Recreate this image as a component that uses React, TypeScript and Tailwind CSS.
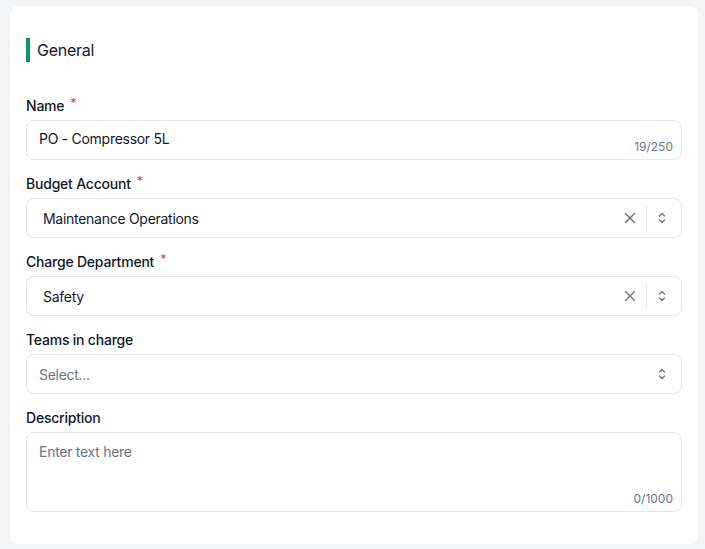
const font = { fontFamily: "Inter, 'Noto Sans', sans-serif" }

function Label({ text, required }: { text: string; required?: boolean }) {
  return (
    <div className="h-5 flex items-center text-[14px] font-medium text-[#111827] leading-5 tracking-[-0.015em] pt-[1px]">
      {text}
      {required && <span className="ml-[6px] text-[#ef4444] text-[12px] -mt-[6px]">*</span>}
    </div>
  )
}

function Chevrons() {
  return (
    <svg width="10" height="14" viewBox="0 0 10 14" fill="none" stroke="#6b7280" strokeWidth="1.4" strokeLinecap="round" strokeLinejoin="round">
      <path d="M2.5 5 L5 2.5 L7.5 5" />
      <path d="M2.5 9 L5 11.5 L7.5 9" />
    </svg>
  )
}

function Clear() {
  return (
    <svg width="12" height="12" viewBox="0 0 12 12" fill="none" stroke="#6b7280" strokeWidth="1.4" strokeLinecap="round">
      <path d="M1.5 1.5 L10.5 10.5" />
      <path d="M10.5 1.5 L1.5 10.5" />
    </svg>
  )
}

function SelectBox({ value, placeholder }: { value?: string; placeholder?: string }) {
  return (
    <div className="h-10 mt-[5px] border border-[#e5e7eb] rounded-[8px] bg-white flex items-center">
      {value ? (
        <span className="flex-1 pl-4 text-[14px] text-[#111827] tracking-[-0.02em]">{value}</span>
      ) : (
        <span className="flex-1 pl-3 text-[14px] text-[#6b7280] tracking-[-0.02em]">{placeholder}</span>
      )}
      {value && (
        <>
          <span className="w-6 flex justify-center mr-[4px]"><Clear /></span>
          <span className="w-px h-6 bg-[#e5e7eb]" />
        </>
      )}
      <span className="w-[30px] flex justify-center mr-[4px]"><Chevrons /></span>
    </div>
  )
}

export default function App() {
  return (
    <main className="min-h-[549px] bg-[#f3f4f6] pt-[6px] pb-[5px]" style={font}>
      <div className="ml-[10px] w-[688px] bg-white rounded-[8px] px-4 pt-[32px] pb-[32px]">
        <div className="flex items-center h-6">
          <span className="w-1 h-6 bg-[#059669]" />
          <span className="ml-[7px] text-[16px] text-[#111827] tracking-[-0.015em]">General</span>
        </div>

        <div className="mt-[33px]">
          <Label text="Name" required />
          <div className="relative h-10 mt-[5px] border border-[#e5e7eb] rounded-[8px] bg-white flex items-center px-3">
            <span className="text-[14px] text-[#111827] tracking-[-0.02em] -mt-[3px]">PO - Compressor 5L</span>
            <span className="absolute right-2 bottom-[3px] text-[12px] text-[#6b7589]">19/250</span>
          </div>
        </div>

        <div className="mt-[13px]">
          <Label text="Budget Account" required />
          <SelectBox value="Maintenance Operations" />
        </div>

        <div className="mt-[13px]">
          <Label text="Charge Department" required />
          <SelectBox value="Safety" />
        </div>

        <div className="mt-[13px]">
          <Label text="Teams in charge" />
          <SelectBox placeholder="Select..." />
        </div>

        <div className="mt-[13px]">
          <Label text="Description" />
          <div className="relative h-[80px] mt-[5px] border border-[#e5e7eb] rounded-[8px] bg-white px-3 pt-[6px]">
            <span className="text-[14px] text-[#6b7280] tracking-[-0.02em]">Enter text here</span>
            <span className="absolute right-2 bottom-[3px] text-[12px] text-[#6b7589]">0/1000</span>
          </div>
        </div>
      </div>
    </main>
  )
}
